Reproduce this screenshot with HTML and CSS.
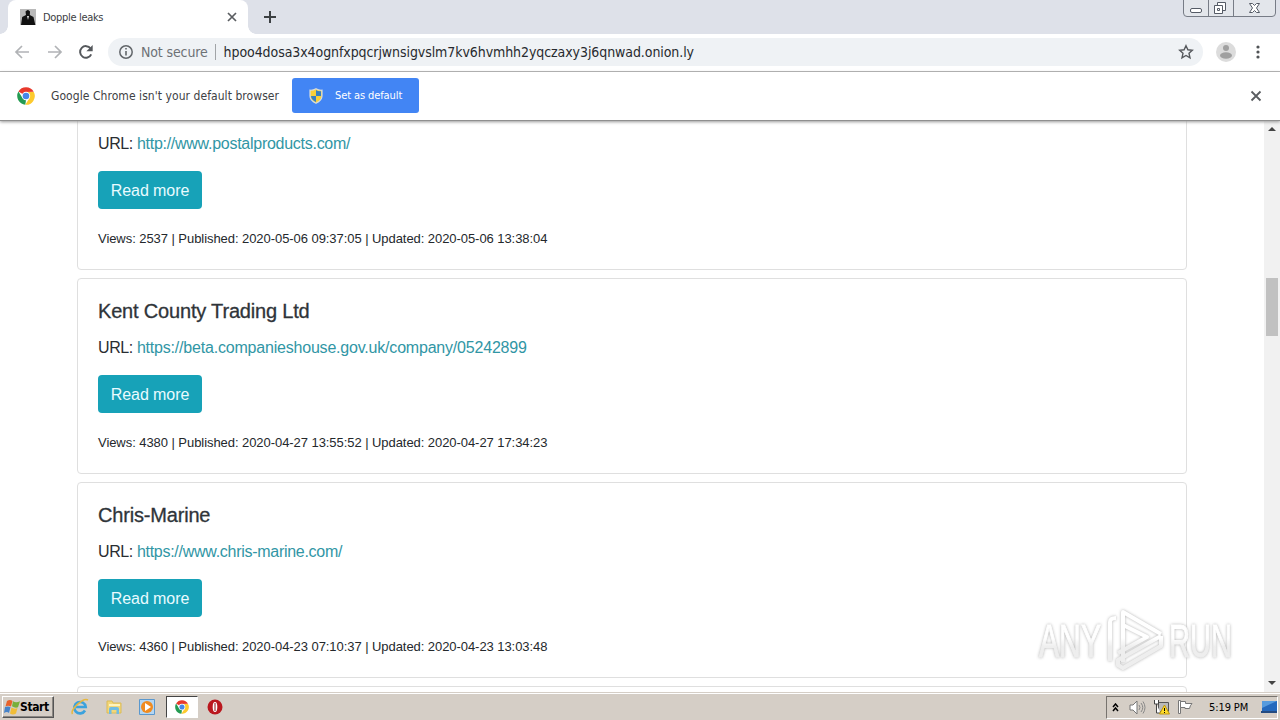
FILE: index.html
```
<!DOCTYPE html>
<html lang="en">
<head>
<meta charset="utf-8">
<title>Dopple leaks</title>
<link rel="stylesheet" href="styles.css">
</head>
<body>
<svg class="defs" aria-hidden="true">
  <symbol id="chrome" viewBox="0 0 18 18">
    <path fill="#e8392c" d="M9 9 1.4 4.6A8.8 8.8 0 0 1 16.7 4.8L9 5z"/>
    <path fill="#249b52" d="M1.4 4.6 5.5 11.1 9 13 8.3 17.8A8.8 8.8 0 0 1 1.4 4.6z"/>
    <path fill="#fdca2e" d="M9 5h7.8A8.8 8.8 0 0 1 8.3 17.8L12.5 11z"/>
    <circle cx="9" cy="9" r="4.2" fill="#fff"/><circle cx="9" cy="9" r="3.3" fill="#4787e8"/>
  </symbol>
  <linearGradient id="mark-fade" x1="0" y1="10" x2="0" y2="68" gradientUnits="userSpaceOnUse"><stop offset=".45" stop-color="#fff"/><stop offset=".6" stop-color="#ededed"/></linearGradient>
</svg>
<div class="screen">
  <header class="tabs">
    <div class="tab">
      <svg class="favicon" width="16" height="16" viewBox="0 0 16 16"><path fill="#b9b9b9" d="M0 0h16v16H0z"/><path fill="#111" d="M5.500 2.500Q8-.5 10 2.500L9.800 6l3.700 2 1.800 8H1l1.200-8L6 6z"/><path fill="#ddd" d="m7 7 1 4 1-4z"/></svg>
      <span class="tab-title">Dopple leaks</span>
      <svg class="tab-close" width="10" height="10" viewBox="0 0 10 10"><path d="m1 1 8 8M9 1 1 9" stroke="#5a5d61" stroke-width="1.7"/></svg>
    </div>
    <svg class="new-tab" width="12" height="12" viewBox="0 0 12 12"><path d="M6 0v12M0 6h12" stroke="#3c4043" stroke-width="2"/></svg>
    <svg class="win-controls" width="94" height="18" viewBox="0 0 94 18">
      <path d="M.5 0v13q0 3.500 3.500 3.500h85q3.500 0 3.500-3.500V0M25.500 0v16M50.500 0v16" fill="#e3e6eb" stroke="#777c86"/>
      <rect x="7.500" y="8.500" width="11" height="4" rx="1.500" fill="#fff" stroke="#555b66"/>
      <path d="M34.500 2.500h8v8h-8z" fill="#fff" stroke="#555b66"/><path d="M31.500 5.500h8v8h-8zM34.500 8.500h2v2h-2z" fill="#fff" stroke="#555b66"/>
      <path d="M66.500 3.500h3l2 2 2-2h3l-3 4.500 3 4.500h-3l-2-2-2 2h-3l3-4.500z" fill="#fff" stroke="#555b66"/>
    </svg>
  </header>

  <nav class="toolbar">
    <svg class="arrow back" width="16" height="14" viewBox="0 0 16 14"><path d="M15 7H2M8 1 2 7l6 6" fill="none" stroke="#b1b3b6" stroke-width="1.700"/></svg>
    <svg class="arrow forward" width="16" height="14" viewBox="0 0 16 14"><path d="M1 7h13M8 1l6 6-6 6" fill="none" stroke="#b1b3b6" stroke-width="1.700"/></svg>
    <svg class="reload" width="16" height="16" viewBox="0 0 16 16"><path d="M13.200 10.300A5.800 5.800 0 1 1 12.600 4.500" fill="none" stroke="#55585c" stroke-width="2"/><path d="M14.700 1v6.300H8.400z" fill="#55585c"/></svg>
    <div class="omnibox">
      <svg width="14" height="14" viewBox="0 0 14 14"><circle cx="7" cy="7" r="6.200" fill="none" stroke="#62666a" stroke-width="1.500"/><path d="M7 6v4.500M7 3v1.600" stroke="#62666a" stroke-width="1.600"/></svg>
      <span class="not-secure">Not secure</span>
      <span class="divider"></span>
      <span class="address">hpoo4dosa3x4ognfxpqcrjwnsigvslm7kv6hvmhh2yqczaxy3j6qnwad.onion.ly</span>
      <svg class="star" width="16" height="16" viewBox="0 0 16 16"><path d="m8 1.700 1.900 4.100 4.400.5-3.300 3 1 4.500L8 11.500l-4 2.300 1-4.500-3.300-3 4.400-.5z" fill="none" stroke="#55585c" stroke-width="1.400"/></svg>
    </div>
    <svg class="avatar" width="20" height="20" viewBox="0 0 20 20"><circle cx="10" cy="10" r="10" fill="#dcdcdc"/><circle cx="10" cy="6" r="3" fill="#a0a0a0"/><ellipse cx="10" cy="13.500" rx="6" ry="3.200" fill="#a0a0a0"/></svg>
    <svg class="menu" width="4" height="14" viewBox="0 0 4 14"><g fill="#505356"><circle cx="2" cy="2" r="1.600"/><circle cx="2" cy="7" r="1.600"/><circle cx="2" cy="12" r="1.600"/></g></svg>
  </nav>

  <div class="infobar">
    <svg width="18" height="18"><use href="#chrome"/></svg>
    <span class="info-text">Google Chrome isn't your default browser</span>
    <div class="default-button">
      <svg width="14" height="16" viewBox="0 0 14 16"><path d="M7 .8Q10 2.500 13 2.200V8q0 4.500-6 7.300Q1 12.500 1 8V2.200Q4 2.500 7 .8z" fill="#f8cf3a" stroke="#d4dce1" stroke-width="1.200"/><path d="M7 2q2 1.500 5 1.200V8H7zM2 8h5v6Q2 11.500 2 8z" fill="#367fc2"/></svg>
      <span>Set as default</span>
    </div>
    <svg class="info-close" width="12" height="12" viewBox="0 0 12 12"><path d="m1.500 1.500 9 9m0-9-9 9" stroke="#5a5d61" stroke-width="1.800"/></svg>
  </div>

  <div class="viewport">
    <main class="cards">
      <article class="card first">
        <p><span class="label">URL: </span><a class="link-postal">http://www.postalproducts.com/</a></p>
        <a class="read">Read more</a>
        <small>Views: 2537 | Published: 2020-05-06 09:37:05 | Updated: 2020-05-06 13:38:04</small>
      </article>
      <article class="card">
        <h5>Kent County Trading Ltd</h5>
        <p><span class="label">URL: </span><a class="link-kent">https://beta.companieshouse.gov.uk/company/05242899</a></p>
        <a class="read">Read more</a>
        <small>Views: 4380 | Published: 2020-04-27 13:55:52 | Updated: 2020-04-27 17:34:23</small>
      </article>
      <article class="card">
        <h5>Chris-Marine</h5>
        <p><span class="label">URL: </span><a class="link-chris">https://www.chris-marine.com/</a></p>
        <a class="read">Read more</a>
        <small>Views: 4360 | Published: 2020-04-23 07:10:37 | Updated: 2020-04-23 13:03:48</small>
      </article>
      <article class="card"></article>
    </main>
    <div class="scrollbar">
      <svg width="8" height="4" viewBox="0 0 8 4"><path d="m0 4 4-4 4 4z" fill="#444"/></svg>
      <span class="thumb"></span>
      <svg class="down" width="8" height="4" viewBox="0 0 8 4"><path d="m0 0 4 4 4-4z" fill="#444"/></svg>
    </div>
  </div>

  <footer class="taskbar">
    <div class="start">
      <svg width="16" height="16" viewBox="0 0 16 16"><path d="M3 2q3-2 5.500 0L7 7.500Q4 6 1.500 7.500z" fill="#e8622b"/><path d="M9 2.300q3 2 7 0l-2 6q-3 1-6-1z" fill="#78af3b"/><path d="M1 8q3-1 5.500 0L5 14q-2-2-5 0z" fill="#4783c9"/><path d="M7.500 8.500q3 2 6 .5l-1.500 5.500q-3 2-6 0z" fill="#f1bd37"/></svg>
      <span>Start</span>
    </div>
    <div class="launchers">
      <svg width="18" height="18" viewBox="0 0 18 18"><path d="M14 12.500a5.700 5.700 0 1 1 .7-3.500H5" fill="none" stroke="#3ba2dd" stroke-width="2.600"/><path d="M1.500 16C-1 12 12-1 17 2" fill="none" stroke="#e7b83e" stroke-width="1.500"/></svg>
      <svg width="18" height="18" viewBox="0 0 18 18"><path d="M2 3h5l1 2h8v10H2z" fill="#f3d779" stroke="#dabb58"/><path d="M4 7h11" stroke="#fff3bd" stroke-width="2"/><path d="M4 16v-5q0-2 2-2h6q2 0 2 2v5h-2.500v-4h-5v4z" fill="#70bce3"/></svg>
      <svg width="18" height="18" viewBox="0 0 18 18"><path d="M1.500 1.500h15v15h-15z" fill="#b4d6f2" stroke="#5a98ce"/><circle cx="9" cy="9" r="6" fill="#f08b20"/><path d="m7 5 6 4-6 4z" fill="#fff"/></svg>
      <div class="active-app"><svg width="14" height="14"><use href="#chrome"/></svg></div>
      <svg width="16" height="16" viewBox="0 0 16 16"><circle cx="8" cy="8" r="7.500" fill="#ba171e"/><ellipse cx="8" cy="8" rx="2.300" ry="5" fill="#fff"/><path d="M8 4v8" stroke="#8c1015"/></svg>
    </div>
    <div class="tray">
      <svg class="chevrons" width="7" height="9" viewBox="0 0 7 9"><path d="m1 4 2.500-3L6 4M1 8l2.500-3L6 8" fill="none" stroke="#000" stroke-width="1.500"/></svg>
      <svg class="speaker" width="17" height="15" viewBox="0 0 17 15"><path d="M1 5h3l4-4v13l-4-4H1z" fill="#fff" stroke="#777"/><path d="M10 5q2 2.500 0 5M12 3q3.500 4.500 0 9M14 1.500q4 6 0 12" fill="none" stroke="#888"/></svg>
      <svg class="network" width="17" height="16" viewBox="0 0 17 16"><path d="M5.500 3.500h10v9h-10z" fill="#b9b9b9" stroke="#555"/><path d="M1.500 1v4h4V1M3.500 5v9h4" fill="#fff" stroke="#444"/><path d="m11.500 6 5 9h-10z" fill="#ffdc28" stroke="#bd9510"/><path d="M11.500 9v3m0 1v1" stroke="#000"/></svg>
      <svg class="flag" width="17" height="16" viewBox="0 0 17 16"><path d="M1.500 1.500h2v13h-2z" fill="#fff" stroke="#777"/><path d="M3.500 2.500h5v2h6.500q-2 2-2.500 5H8v-1H3.500z" fill="#fff" stroke="#777"/></svg>
      <span class="clock">5:19 PM</span>
      <svg class="desktop" width="16" height="14" viewBox="0 0 16 14"><path d="M1 1h15v10H1z" fill="#2469bd"/><path d="M1 1h15L1 8z" fill="#569bde"/><path d="M0 11h16v2H0z" fill="#234b81"/></svg>
    </div>
  </footer>

  <div class="watermark">
    <svg width="210" height="80" viewBox="0 0 210 80">
      <g class="mark-shape"><path d="M80 59V20q0-4 6-4"/><path d="M93 60V10l38 22M93 45V23l24 12-29 16"/><path d="m131 34-43 24v5l5 3 38-22v-10"/></g>
      <g class="mark-text"><text x="9" y="55" textLength="62" lengthAdjust="spacingAndGlyphs">ANY</text><text x="139" y="55" textLength="63" lengthAdjust="spacingAndGlyphs">RUN</text></g>
    </svg>
  </div>
</div>
</body>
</html>
```
FILE: styles.css
```
* { box-sizing: border-box; }
body { margin: 0; }
svg { display: block; flex: none; }
.defs { position: absolute; width: 0; height: 0; }
.screen { position: relative; width: 1280px; height: 720px; overflow: hidden; display: flex; flex-direction: column; background: #fff; font-family: "DejaVu Sans Condensed", "DejaVu Sans", sans-serif; white-space: nowrap; }

.tabs { height: 34px; flex: none; display: flex; background: #dee1e9; padding-left: 8px; }
.tab { width: 240px; background: #fff; border-radius: 8px 8px 0 0; display: flex; align-items: center; padding: 0 11px 0 12px; position: relative; }
.tab::before, .tab::after { content: ""; position: absolute; bottom: 0; width: 8px; height: 8px; }
.tab::before { left: -8px; background: radial-gradient(circle at 0 0, #dee1e9 7.5px, #fff 8px); }
.tab::after { right: -8px; background: radial-gradient(circle at 100% 0, #dee1e9 7.5px, #fff 8px); }
.tab-title { margin-left: 7px; font-size: 11px; letter-spacing: -.32px; color: #3c4043; }
.tab-close { margin-left: auto; }
.new-tab { margin: 11px 0 0 16px; }
.win-controls { margin: 0 3px 0 auto; }

.toolbar { height: 38px; flex: none; display: flex; align-items: center; border-bottom: 1px solid #b4b4b4; padding: 0 20px 1px 14px; }
.forward { margin-left: 17px; }
.reload { margin-left: 15px; }
.omnibox { width: 1095px; height: 28px; margin-left: 14px; border-radius: 14px; background: #eff2f5; display: flex; align-items: center; padding: 0 9px 0 11px; font-size: 14px; }
.not-secure { margin-left: 8px; color: #6d7175; letter-spacing: -.13px; }
.divider { width: 1px; height: 16px; background: #a1a4a7; margin: 0 8px 0 7px; }
.address { color: #272a2e; letter-spacing: -.08px; }
.star { margin-left: auto; }
.avatar { margin-left: 13px; }
.menu { margin-left: auto; }

.infobar { height: 49px; flex: none; display: flex; align-items: center; border-bottom: 1px solid #8f8f8f; padding: 0 18px 1px 17px; font-size: 12px; color: #3e4144; position: relative; z-index: 1; box-shadow: 0 1px 3px #999; background: #fff; }
.info-text { margin-left: 16px; width: 229px; letter-spacing: .06px; }
.default-button { width: 127px; height: 35px; margin-left: 12px; border-radius: 3px; background: #4285f4; color: #fff; display: flex; align-items: center; gap: 12px; padding-left: 17px; font-size: 11px; letter-spacing: -.1px; }
.info-close { margin-left: auto; }

.viewport { height: 571px; flex: none; display: flex; overflow: hidden; font-family: "Liberation Sans", Arial, sans-serif; }
.cards { width: 1110px; margin: -47px 0 0 77px; display: flex; flex-direction: column; gap: 8px; }
.card { height: 196px; flex: none; border: 1px solid #dfdfdf; border-radius: 4px; padding: 20px; display: flex; flex-direction: column; align-items: flex-start; }
.card.first { padding-top: 56px; }
.card h5 { margin: 0 0 12px; font-size: 20px; font-weight: 400; line-height: 24px; color: #2f3439; letter-spacing: -.18px; -webkit-text-stroke: .3px #2f3439; }
.card p { margin: 1px 0 15px; font-size: 16px; line-height: 24px; color: #292d31; }
.card h5 + p { margin-top: 1px; }
.card a { color: #3196a5; }
.card .label { letter-spacing: -.4px; }
.card .link-postal { letter-spacing: -.27px; }
.card .link-kent { letter-spacing: -.2px; }
.card .link-chris { letter-spacing: -.28px; }
.card .read { width: 104px; height: 38px; flex: none; border-radius: 4px; background: #17a2b8; color: #e9fbff; font-size: 16px; line-height: 40px; text-align: center; letter-spacing: -.07px; }
.card small { margin-top: 18px; font-size: 13px; line-height: 24px; color: #24282c; letter-spacing: -.06px; }

.scrollbar { width: 16px; margin-left: auto; background: #f1f1f1; display: flex; flex-direction: column; align-items: center; padding: 6px 0 7px; }
.thumb { width: 12px; height: 58px; background: #c1c1c1; margin-top: 147px; }
.down { margin-top: auto; }

.taskbar { height: 28px; flex: none; display: flex; align-items: center; background: #d5cec6; border-top: 1px solid #d5cec6; box-shadow: inset 0 1px #fff; padding-left: 2px; }
.start { width: 52px; height: 22px; margin-top: 1px; display: flex; align-items: center; gap: 0; padding-left: 1px; border: 1px solid; border-color: #fff #555 #555 #fff; box-shadow: inset -1px -1px #8b8782; font-size: 12px; font-weight: 700; letter-spacing: -.4px; }
.launchers { display: flex; align-items: center; margin: 1px 0 0 17px; gap: 15.5px; }
.active-app { width: 32px; height: 22px; margin: 0 -6px; background: #fff; border: 1px solid; border-color: #444 #fff #fff #444; display: flex; justify-content: center; align-items: center; }
.tray { width: 172px; height: 23px; margin: 1px 2px 0 auto; border: 1px solid; border-color: #77736e #fff #fff #77736e; display: flex; align-items: center; padding-left: 5px; font-size: 11px; }
.speaker { margin-left: 10px; }
.network { margin-left: 7px; }
.flag { margin-left: 7px; }
.clock { margin-left: 15px; width: 43px; letter-spacing: -.1px; }
.desktop { margin-left: 9px; }

.watermark { position: absolute; left: 1030px; top: 602px; filter: drop-shadow(0 0 1.5px #aaa); opacity: .9; }
.mark-shape { fill: none; stroke: url(#mark-fade); stroke-width: 4px; stroke-linejoin: round; }
.mark-text { font: 46px "Liberation Sans", sans-serif; fill: url(#mark-fade); stroke: url(#mark-fade); stroke-width: 1px; }
```
